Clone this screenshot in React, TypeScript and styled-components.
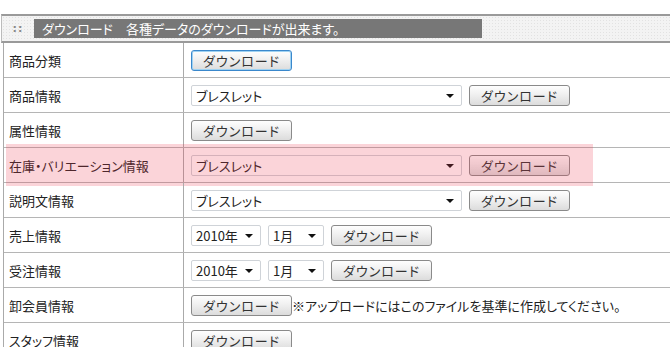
import styled, { createGlobalStyle } from "styled-components";

const GlobalStyle = createGlobalStyle`
  html, body {
    margin: 0;
    padding: 0;
    background: #fff;
  }
  body {
    font-family: "Noto Sans CJK JP", "Noto Sans", sans-serif;
    font-size: 13px;
    color: #222;
  }
`;

const Page = styled.div`
  padding: 14px 0 0 1px;
  width: 669px;
  overflow: hidden;
`;

const HeaderBar = styled.div`
  display: flex;
  align-items: center;
  height: 23px;
  padding: 1px 0;
  border-top: 2px solid #9a9a9a;
  border-bottom: 2px solid #9a9a9a;
  border-left: 1px solid #bbb;
  background-color: #f3f3f3;
  background-image: radial-gradient(#e2e2e2 1px, transparent 1px);
  background-size: 3px 3px;
`;

const Grip = styled.div`
  width: 32px;
  display: flex;
  justify-content: center;
  color: #8a8a8a;
  font-family: "DejaVu Sans", sans-serif;
  font-size: 11px;
  font-weight: bold;
  letter-spacing: 1px;
  line-height: 1;
`;

const HeaderTitle = styled.div`
  width: 440px;
  height: 19px;
  background: #777;
  color: #fff;
  display: flex;
  align-items: center;
  padding-left: 8px;
  font-size: 13px;
  font-feature-settings: "palt";
  white-space: pre;
`;

const Table = styled.div`
  border-left: 1px solid #aaa;
  margin-left: 2px;
`;

const Row = styled.div`
  position: relative;
  display: grid;
  grid-template-columns: 180px 1fr;
  height: 35px;
  box-sizing: border-box;
  border-bottom: 1px solid #b5b5b5;
`;

const Label = styled.div`
  display: flex;
  align-items: center;
  padding-left: 5px;
  border-right: 1px solid #aaa;
  font-feature-settings: "palt";
  white-space: nowrap;
`;

const Value = styled.div`
  display: flex;
  align-items: center;
  padding-left: 7px;
  gap: 7px;
`;

const Button = styled.div<{ $focus?: boolean }>`
  width: 101px;
  height: 21px;
  box-sizing: border-box;
  display: flex;
  align-items: center;
  justify-content: center;
  border: 1px solid ${(p) => (p.$focus ? "#3a88cc" : "#8a8a8a")};
  border-radius: 3px;
  background: linear-gradient(#fefefe, #f0f0f0 45%, #dcdcdc);
  box-shadow: ${(p) => (p.$focus ? "inset 0 0 0 1px #9fd2f2" : "none")};
  color: #333;
  font-size: 13px;
  font-feature-settings: "palt";
  letter-spacing: 1px;
`;

const SelectBox = styled.div<{ $width: number }>`
  width: ${(p) => p.$width}px;
  height: 21px;
  box-sizing: border-box;
  border: 1px solid #cfd3d8;
  border-radius: 2px;
  background: #fff;
  display: flex;
  align-items: center;
  justify-content: space-between;
  padding: 0 7px 0 4px;
  font-size: 13px;
  font-feature-settings: "palt";
  color: #222;
`;

const Arrow = styled.span`
  width: 0;
  height: 0;
  border-left: 4px solid transparent;
  border-right: 4px solid transparent;
  border-top: 4px solid #111;
  margin-top: 2px;
`;

const Note = styled.span`
  margin-left: -7px;
  font-size: 13px;
  font-feature-settings: "palt";
  white-space: nowrap;
`;

const Highlight = styled.div`
  position: absolute;
  left: 2px;
  top: -4px;
  width: 587px;
  height: 42px;
  background: rgba(235, 60, 80, 0.22);
  pointer-events: none;
`;

function Select({ width, text }: { width: number; text: string }) {
  return (
    <SelectBox $width={width}>
      <span>{text}</span>
      <Arrow />
    </SelectBox>
  );
}

function DateSelects() {
  return (
    <>
      <Select width={70} text="2010年" />
      <Select width={56} text="1月" />
    </>
  );
}

export default function App() {
  return (
    <>
      <GlobalStyle />
      <Page>
        <HeaderBar>
          <Grip>::</Grip>
          <HeaderTitle>{"ダウンロード　各種データのダウンロードが出来ます。"}</HeaderTitle>
        </HeaderBar>
        <Table>
          <Row>
            <Label>商品分類</Label>
            <Value>
              <Button $focus>ダウンロード</Button>
            </Value>
          </Row>
          <Row>
            <Label>商品情報</Label>
            <Value>
              <Select width={271} text="ブレスレット" />
              <Button>ダウンロード</Button>
            </Value>
          </Row>
          <Row>
            <Label>属性情報</Label>
            <Value>
              <Button>ダウンロード</Button>
            </Value>
          </Row>
          <Row>
            <Highlight />
            <Label>在庫・バリエーション情報</Label>
            <Value>
              <Select width={271} text="ブレスレット" />
              <Button>ダウンロード</Button>
            </Value>
          </Row>
          <Row>
            <Label>説明文情報</Label>
            <Value>
              <Select width={271} text="ブレスレット" />
              <Button>ダウンロード</Button>
            </Value>
          </Row>
          <Row>
            <Label>売上情報</Label>
            <Value>
              <DateSelects />
              <Button>ダウンロード</Button>
            </Value>
          </Row>
          <Row>
            <Label>受注情報</Label>
            <Value>
              <DateSelects />
              <Button>ダウンロード</Button>
            </Value>
          </Row>
          <Row>
            <Label>卸会員情報</Label>
            <Value>
              <Button>ダウンロード</Button>
              <Note>※アップロードにはこのファイルを基準に作成してください。</Note>
            </Value>
          </Row>
          <Row>
            <Label>スタッフ情報</Label>
            <Value>
              <Button>ダウンロード</Button>
            </Value>
          </Row>
        </Table>
      </Page>
    </>
  );
}
